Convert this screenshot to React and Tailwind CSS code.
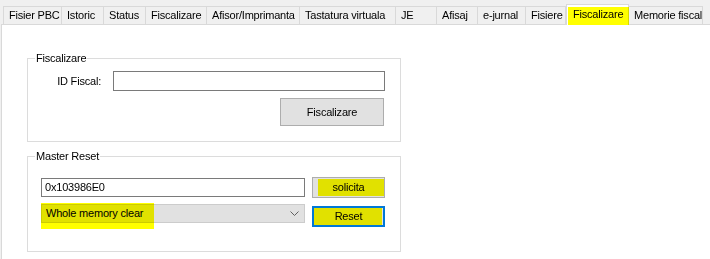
import React from 'react';

const tabs = [
  { label: 'Fisier PBC', w: 'w-[59px]' },
  { label: 'Istoric', w: 'w-[42px]' },
  { label: 'Status', w: 'w-[42px]' },
  { label: 'Fiscalizare', w: 'w-[61px]' },
  { label: 'Afisor/Imprimanta', w: 'w-[93px]' },
  { label: 'Tastatura virtuala', w: 'w-[96px]' },
  { label: 'JE', w: 'w-[41px]' },
  { label: 'Afisaj', w: 'w-[41px]' },
  { label: 'e-jurnal', w: 'w-[48px]' },
  { label: 'Fisiere', w: 'w-[40px]' },
  { label: 'Fiscalizare', w: 'w-[63px]', active: true },
  { label: 'Memorie fiscal', w: 'w-[74px]' },
];

// yellow marker stroke, multiplied over whatever is below
const Marker = ({ className }) => (
  <span className={`pointer-events-none absolute bg-[#ffff00] mix-blend-multiply ${className}`} />
);

const GroupBox = ({ title, className, children }) => (
  <div className={`relative ml-[25px] w-[374px] border border-[#dcdcdc] ${className}`}>
    <span className="absolute -top-[8px] left-[7px] bg-white px-[1px] leading-[14px]">{title}</span>
    {children}
  </div>
);

export default function App() {
  return (
    <div
      className="flex h-[259px] w-[710px] flex-col overflow-hidden bg-[#f0f0f0] text-[11px] tracking-[-0.2px] text-black"
      style={{ fontFamily: '"Liberation Sans", Arial, sans-serif' }}
    >
      {/* tab strip */}
      <div className="relative z-10 flex h-[24px] items-end pl-[3px]">
        {tabs.map((t, i) =>
          t.active ? (
            <div
              key={i}
              className={`relative -mb-[1px] flex h-[21px] items-center border border-b-0 border-[#d9d9d9] bg-white pl-[6px] ${t.w}`}
            >
              <Marker className="left-[1px] top-[2px] h-[18px] w-[61px]" />
              <span className="relative -mt-[2px]">{t.label}</span>
            </div>
          ) : (
            <div
              key={i}
              className={`flex h-[18px] items-center whitespace-nowrap border border-b-0 border-[#d9d9d9] bg-[#f0f0f0] pl-[5px] ${t.w} ${i > 0 ? 'border-l-0' : ''}`}
            >
              {t.label}
            </div>
          )
        )}
      </div>

      {/* page */}
      <div className="ml-[1px] flex-1 border-l border-t border-[#d9d9d9] bg-white">
        <GroupBox title="Fiscalizare" className="mt-[33px] h-[84px]">
          <div className="flex items-center pt-[12px]">
            <span className="w-[74px] pr-[1px] text-right">ID Fiscal:</span>
            <div className="ml-[11px] h-[20px] w-[272px] border border-[#7a7a7a] bg-white" />
          </div>
          <button className="ml-[252px] mt-[7px] h-[28px] w-[104px] border border-[#adadad] bg-[#e1e1e1]">
            Fiscalizare
          </button>
        </GroupBox>

        <GroupBox title="Master Reset" className="mt-[14px] h-[96px]">
          <div className="flex items-center pl-[13px] pt-[20px]">
            <div className="flex h-[19px] w-[264px] items-center border border-[#7a7a7a] bg-white pl-[3px]">
              0x103986E0
            </div>
            <button className="relative ml-[7px] h-[21px] w-[73px] border border-[#adadad] bg-[#e1e1e1]">
              <Marker className="bottom-[1px] left-[5px] top-[1px] w-[66px]" />
              <span className="relative">solicita</span>
            </button>
          </div>
          <div className="mt-[6px] flex items-start pl-[13px]">
            <div className="relative flex h-[19px] w-[264px] items-center justify-between border border-[#cccccc] bg-[#e1e1e1] pl-[4px] pr-[5px]">
              <span>Whole memory clear</span>
              <svg width="9" height="6" viewBox="0 0 9 6" fill="none" stroke="#606060" strokeWidth="1">
                <path d="M0.5 0.5 L4.5 4.5 L8.5 0.5" />
              </svg>
              <Marker className="-left-[1px] -top-[2px] h-[26px] w-[113px]" />
            </div>
            <button className="relative ml-[7px] mt-[2px] h-[21px] w-[73px] border-2 border-[#0078d7] bg-[#e1e1e1]">
              <Marker className="bottom-0 left-0 top-0 w-[68px]" />
              <span className="relative">Reset</span>
            </button>
          </div>
        </GroupBox>
      </div>
    </div>
  );
}
